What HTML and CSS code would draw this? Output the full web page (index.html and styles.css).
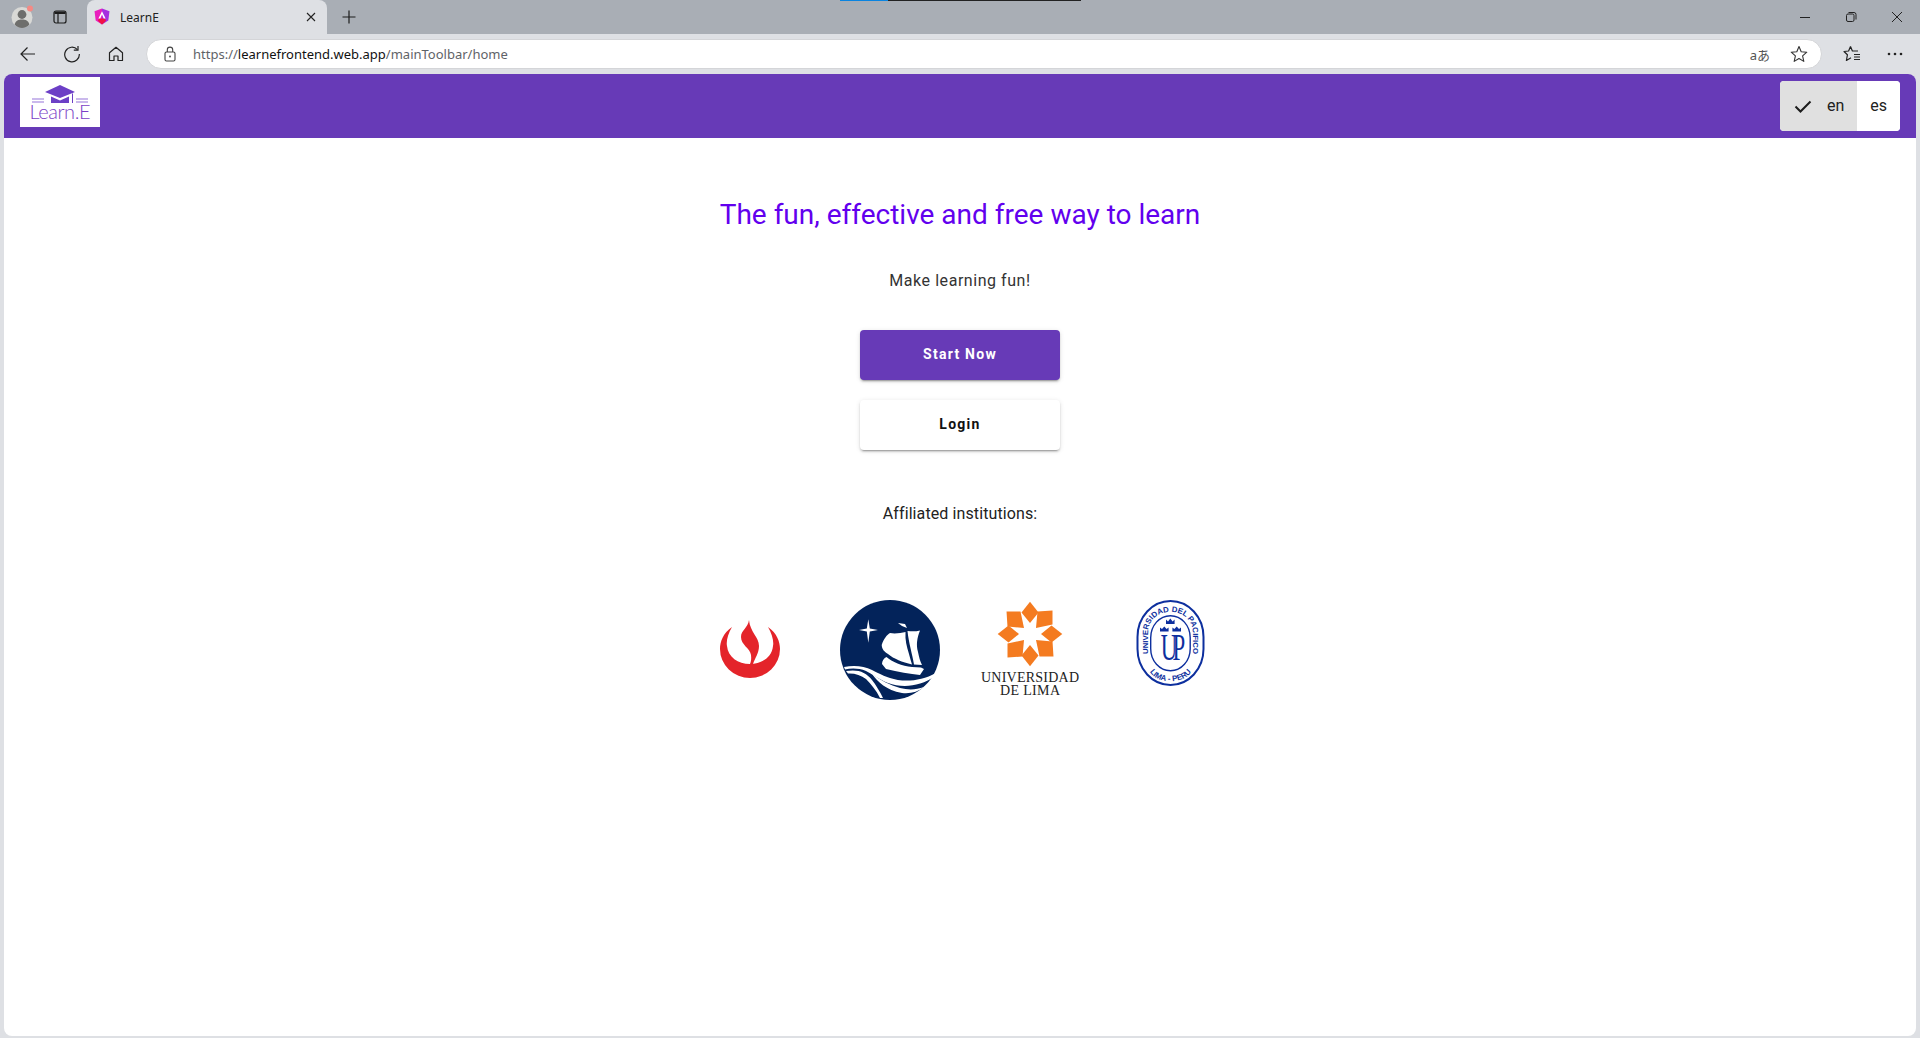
FILE: index.html
```html
<!DOCTYPE html>
<html lang="en">
<head>
  <meta charset="UTF-8">
  <meta name="viewport" content="width=device-width, initial-scale=1.0">
  <title>LearnE</title>
  <link rel="stylesheet" href="styles.css">
</head>
<body>
  <!-- Browser frame -->
  <div class="load-line"><span class="load-blue"></span><span class="load-dark"></span></div>
  <div class="tabbar">
    <div class="avatar">
      <svg width="24" height="24" viewBox="0 0 24 24">
        <circle cx="11" cy="12.5" r="10.5" fill="#d9d9d6"/>
        <circle cx="11" cy="9.5" r="4.4" fill="#6e6e6c"/>
        <path d="M3.6 19.5C4.6 15.8 7.5 14.6 11 14.6S17.4 15.8 18.4 19.5C16.5 21.7 14 23 11 23S5.5 21.7 3.6 19.5Z" fill="#6e6e6c"/>
        <circle cx="19" cy="3.4" r="3" fill="#f48a85"/>
      </svg>
    </div>
    <div class="tab-actions">
      <svg width="16" height="16" viewBox="0 0 16 16" fill="none" stroke="#1c1c1c" stroke-width="1.2">
        <rect x="2" y="2" width="12" height="12" rx="2"/>
        <path d="M6 5V14"/>
        <path d="M2.5 2.5H13.5V5H2.5Z" fill="#1c1c1c" stroke="none"/>
      </svg>
    </div>
    <div class="tab">
      <svg class="tab-icon" width="16" height="18" viewBox="0 0 16 18">
        <path d="M8 0.5L0.5 3.2L1.7 12.6L8 16.5Z" fill="#e91fbd"/>
        <path d="M8 0.5L15.5 3.2L14.3 12.6L8 16.5Z" fill="#a62fe0"/>
        <path d="M4 12.7L5 10.4H11L12 12.7L8 16.5Z" fill="#f01145"/>
        <path d="M8 3.2L11.6 10.4H9.7L8 6.6L6.3 10.4H4.4Z" fill="#fff"/>
      </svg>
      <span class="tab-title">LearnE</span>
      <svg class="tab-close" width="12" height="12" viewBox="0 0 12 12" fill="none" stroke="#222" stroke-width="1.1">
        <path d="M2 2L10 10M10 2L2 10"/>
      </svg>
    </div>
    <div class="new-tab">
      <svg width="14" height="14" viewBox="0 0 14 14" fill="none" stroke="#1c1c1c" stroke-width="1.2">
        <path d="M7 0.5V13.5M0.5 7H13.5"/>
      </svg>
    </div>
    <div class="window-btns">
      <svg width="12" height="12" viewBox="0 0 12 12" fill="none" stroke="#222" stroke-width="1"><path d="M1 6.5H11"/></svg>
      <svg width="12" height="12" viewBox="0 0 12 12" fill="none" stroke="#222" stroke-width="1"><rect x="1.5" y="3" width="7.5" height="7.5" rx="1.5"/><path d="M3.5 1.5H9A2 2 0 0 1 11 3.5V8.5"/></svg>
      <svg width="12" height="12" viewBox="0 0 12 12" fill="none" stroke="#222" stroke-width="1"><path d="M1 1L11 11M11 1L1 11"/></svg>
    </div>
  </div>

  <div class="navbar">
    <svg class="nav-icon" width="18" height="18" viewBox="0 0 18 18" fill="none" stroke="#222" stroke-width="1.2"><path d="M16 9H2M8.5 2.5L2 9L8.5 15.5"/></svg>
    <svg class="nav-icon" width="18" height="18" viewBox="0 0 18 18" fill="none" stroke="#222" stroke-width="1.2"><path d="M14.4 4.6A7.3 7.3 0 1 0 16.3 9"/><path d="M15 1V5.2H10.8"/></svg>
    <svg class="nav-icon" width="18" height="18" viewBox="0 0 18 18" fill="none" stroke="#222" stroke-width="1.2"><path d="M9 2.3L2.5 7.8V15.5H7V11H11V15.5H15.5V7.8Z" stroke-linejoin="round"/></svg>
    <div class="address">
      <svg class="lock" width="14" height="16" viewBox="0 0 14 16" fill="none" stroke="#444" stroke-width="1.1"><rect x="2" y="6" width="10" height="9" rx="1.5"/><path d="M4.3 6V3.8A2.7 2.7 0 0 1 9.7 3.8V6"/><circle cx="7" cy="10.5" r="0.9" fill="#444" stroke="none"/></svg>
      <span class="url"><span class="url-dim">https://</span>learnefrontend.web.app<span class="url-dim">/mainToolbar/home</span></span>
      <span class="translate">aあ</span>
      <svg class="star-icon" width="18" height="18" viewBox="0 0 18 18" fill="none" stroke="#333" stroke-width="1.1"><path d="M9 1.5L11.2 6.7L16.8 7.2L12.6 10.9L13.8 16.4L9 13.5L4.2 16.4L5.4 10.9L1.2 7.2L6.8 6.7Z" stroke-linejoin="round"/></svg>
    </div>
    <svg class="fav-icon" width="18" height="18" viewBox="0 0 18 18" fill="none" stroke="#222" stroke-width="1.2"><path d="M7.5 1.5L9.4 6H15M7.5 1.5L5.6 6L1 6.5L4.4 9.8L3.4 15.5L8 12.8" stroke-linejoin="round"/><path d="M11 9.5H17M11 12H17M11 14.5H17"/></svg>
    <svg class="more-icon" width="16" height="4" viewBox="0 0 16 4" fill="#222"><circle cx="2" cy="2" r="1.3"/><circle cx="8" cy="2" r="1.3"/><circle cx="14" cy="2" r="1.3"/></svg>
  </div>

  <!-- Page -->
  <div class="page">
    <header class="toolbar">
      <div class="logo">
        <svg width="80" height="50" viewBox="0 0 80 50">
          <path d="M40 8L55 15L40 21L25 15Z" fill="#6c3fc6"/>
          <path d="M31 19.5V26H49V19.5L40 23.5Z" fill="#6c3fc6"/>
          <path d="M52.5 16.5V26" stroke="#6c3fc6" stroke-width="1"/>
          <path d="M12 22H24M56 22H68M12 25H24M56 25H68" stroke="#b9a2e6" stroke-width="1.6"/>
          <text x="40" y="42" text-anchor="middle" class="logo-text" textLength="61">Learn.E</text>
        </svg>
      </div>
      <div class="lang-toggle">
        <button class="lang-btn lang-on">
          <svg width="18" height="18" viewBox="0 0 18 18" fill="none" stroke="#1c1c1c" stroke-width="2"><path d="M1.5 9.5L6.5 14.5L16.5 4.5"/></svg>
          en
        </button>
        <button class="lang-btn">es</button>
      </div>
    </header>

    <main class="home">
      <h1 class="title">The fun, effective and free way to learn</h1>
      <p class="subtitle">Make learning fun!</p>
      <button class="cta cta-primary">Start Now</button>
      <button class="cta">Login</button>
      <p class="affiliated">Affiliated institutions:</p>

      <div class="logos">
        <!-- UPC -->
        <svg width="100" height="100" viewBox="0 0 100 100">
          <path d="M32 27C23 33 20 42 20 49A30 29 0 0 0 80 49C80 42 77 33 68 27C72 34 74 41 73 46C72 57 62 64 50 64C38 64 28 57 27 46C26 41 28 34 32 27Z" fill="#e4242a"/>
          <path d="M49 20C48 28 41 30 41 37C41 45 50 48 51 55C51.5 59 51 62 50 64L53 64C55 58 59 53 59 46C59 37 50 32 49 20Z" fill="#e4242a"/>
        </svg>
        <!-- PUCP ship -->
        <svg width="100" height="100" viewBox="0 0 100 100">
          <circle cx="50" cy="50" r="50" fill="#03235a"/>
          <g fill="#fff">
            <path d="M28.3 19.3L29.8 28.5L38 30L29.8 31.5L28.3 42.7L26.8 31.5L19 30L26.8 28.5Z"/>
            <path d="M58 23L65 24L67 28L62 26Z"/>
            <path d="M41.7 45C44 38 47 35 50 33C55 34 61 33 65.5 32C65 40 66.5 46 69 54C70 58 71 61 72 64.5C62 62 54 59 48 54C45 52 42 50 41.7 45Z"/>
            <path d="M67.5 31C72 31.5 76 31.5 80 30.5C77 38 76 45 78 52C79 57 80 61 82 65L74 64.5C72.5 55 68.5 42 67.5 31Z"/>
            <path d="M42 64C42 61 44 58 46.5 57C52 62 62 66 72 67L81 67.5L84 69L80 75C70 74 58 72 46 69Z"/>
            <path d="M4 67C14 65 24 66 32 70C40 74 44 76 50 78C62 82 80 82 96 73L95 76C80 87 62 88 48 83C38 79 32 74 26 71C19 68 11 68 5 69.5Z"/>
            <path d="M6 71C18 69 26 72 32 80C36 85 40 92 43 98L40 98C36 90 31 84 26 79C21 75 14 73 8 73.5Z"/>
            <path d="M32 74C38 82 46 90 62 93C70 94 78 92 84 87C76 90 68 90 60 88C50 85 40 80 32 74Z"/>
          </g>
        </svg>
        <!-- Universidad de Lima -->
        <svg width="100" height="100" viewBox="0 0 100 100">
          <g fill="#f47b20">
            <path id="limaDiamond" d="M50 1.7L58.5 12.5L50 23L41.5 12.5Z"/>
            <path id="limaSquare" d="M26.5 11.5L40.5 11.5L44 28L27.5 26.5Z"/>
            <use href="#limaDiamond" transform="rotate(90 50 34)"/>
            <use href="#limaDiamond" transform="rotate(180 50 34)"/>
            <use href="#limaDiamond" transform="rotate(270 50 34)"/>
            <use href="#limaSquare" transform="rotate(90 50 34)"/>
            <use href="#limaSquare" transform="rotate(180 50 34)"/>
            <use href="#limaSquare" transform="rotate(270 50 34)"/>
          </g>
          <text x="50" y="81.5" text-anchor="middle" class="lima-text" textLength="98">UNIVERSIDAD</text>
          <text x="50" y="95" text-anchor="middle" class="lima-text" textLength="60">DE LIMA</text>
        </svg>
        <!-- Universidad del Pacifico -->
        <svg width="100" height="100" viewBox="0 0 100 100">
          <rect x="17.5" y="1" width="66" height="84" rx="33" ry="36" fill="#fff" stroke="#0d2f9e" stroke-width="2"/>
          <rect x="30.7" y="15.7" width="39.5" height="55" rx="19.7" ry="22" fill="#fff" stroke="#0d2f9e" stroke-width="1.4"/>
          <defs>
            <path id="upTop" d="M28 62V34C28 20 38 12 50.5 12S73 20 73 34V62"/>
            <path id="upBottom" d="M29 70C35 85 66 85 72 70"/>
          </defs>
          <text class="up-ring"><textPath href="#upTop" startOffset="50%" text-anchor="middle">UNIVERSIDAD DEL PACIFICO</textPath></text>
          <text class="up-ring"><textPath href="#upBottom" startOffset="50%" text-anchor="middle">LIMA - PERU</textPath></text>
          <g fill="#0d2f9e">
            <path d="M46 19.5L48 21.5L50.3 18.5L52.6 21.5L54.6 19.5V24H46Z"/>
            <path d="M40 27.5L42 29L44.3 26.5L46.6 29L48.6 27.5V31.5H40Z"/>
            <path d="M52.4 27.5L54.4 29L56.7 26.5L59 29L61 27.5V31.5H52.4Z"/>
          </g>
          <text transform="translate(50.5 60) scale(.6 1)" text-anchor="middle" class="up-mark">UP</text>
        </svg>
      </div>
    </main>
  </div>
</body>
</html>
```

FILE: styles.css
```css
html, body {
  height: 100%;
}
body {
  margin: 0;
  display: flex;
  flex-direction: column;
  height: 1038px;
  overflow: hidden;
  background: #dee0e4;
  font-family: Roboto, Arial, sans-serif;
}

/* browser frame */
.load-line {
  position: absolute;
  top: 0;
  left: 840px;
  display: flex;
  height: 1px;
}
.load-blue {
  width: 48px;
  background: #0a84e0;
}
.load-dark {
  width: 193px;
  background: #222;
}
.tabbar {
  display: flex;
  align-items: center;
  height: 34px;
  flex: none;
  background: #a9aeb5;
}
.avatar {
  display: flex;
  width: 52px;
  padding-left: 11px;
  box-sizing: border-box;
}
.tab-actions {
  display: flex;
  width: 35px;
}
.tab {
  display: flex;
  align-items: center;
  align-self: stretch;
  width: 240px;
  box-sizing: border-box;
  padding: 0 10px 0 7px;
  background: #dee0e4;
  border-radius: 8px 8px 0 0;
}
.tab-icon {
  flex: none;
}
.tab-title {
  flex: 1;
  margin-left: 10px;
  font-family: "Noto Sans", Arial, sans-serif;
  font-size: 12px;
  color: #222;
}
.new-tab {
  display: flex;
  margin-left: 15px;
}
.window-btns {
  display: flex;
  gap: 34px;
  margin-left: auto;
  margin-right: 17px;
}
.navbar {
  display: flex;
  align-items: center;
  height: 40px;
  flex: none;
  padding-left: 19px;
}
.nav-icon {
  margin-right: 26px;
  flex: none;
}
.nav-icon:nth-child(3) {
  margin-right: 21px;
}
.address {
  display: flex;
  align-items: center;
  width: 1676px;
  height: 30px;
  flex: none;
  box-sizing: border-box;
  padding: 0 13px 0 16px;
  background: #fff;
  border: 1px solid #d4d5d8;
  border-radius: 15px;
}
.lock {
  flex: none;
  margin-right: 16px;
}
.url {
  flex: 1;
  font-family: "Noto Sans", Arial, sans-serif;
  font-size: 13px;
  color: #111;
}
.url-dim {
  color: #5f6368;
}
.translate {
  margin-right: 20px;
  font-family: "Noto Sans", "Noto Sans CJK JP", sans-serif;
  font-size: 13px;
  color: #555;
}
.star-icon {
  flex: none;
}
.fav-icon {
  margin-left: 21px;
  flex: none;
}
.more-icon {
  margin-left: 26px;
  flex: none;
}

/* page */
.page {
  flex: 1;
  display: flex;
  flex-direction: column;
  margin: 0 4px 2px;
  overflow: hidden;
  background: #fff;
  border-radius: 8px;
}
.toolbar {
  display: flex;
  align-items: center;
  justify-content: space-between;
  height: 64px;
  flex: none;
  padding: 0 16px;
  background: #673ab7;
}
.logo {
  display: flex;
  width: 80px;
  height: 50px;
  margin-top: -8px;
  background: #fff;
}
.logo-text {
  font-family: Lato, Arial, sans-serif;
  font-weight: 300;
  font-size: 20px;
  fill: #7b3fc6;
}
.lang-toggle {
  display: flex;
  height: 50px;
  overflow: hidden;
  background: #fff;
  border-radius: 4px;
}
.lang-btn {
  display: flex;
  align-items: center;
  gap: 15px;
  padding: 0 13px 2px;
  border: none;
  background: #fff;
  color: #212121;
  font-family: Roboto, Arial, sans-serif;
  font-size: 16px;
}
.lang-btn svg {
  margin-top: 2px;
}
.lang-on {
  padding: 0 13px 2px 14px;
  background: #e0e0e0;
}
.home {
  flex: 1;
  display: flex;
  flex-direction: column;
  align-items: center;
}
.title {
  margin: 58px 0 0;
  font-size: 28px;
  font-weight: 400;
  line-height: 38px;
  color: #6200ee;
}
.subtitle {
  margin: 35px 0 0;
  font-size: 16px;
  line-height: 24px;
  letter-spacing: 0.55px;
  color: #333;
}
.cta {
  width: 200px;
  height: 50px;
  flex: none;
  margin-top: 20px;
  padding: 0 0 2px;
  border: none;
  border-radius: 4px;
  background: #fff;
  color: #111;
  font-family: Roboto, Arial, sans-serif;
  font-size: 14px;
  font-weight: 700;
  letter-spacing: 1.25px;
  box-shadow: 0 3px 1px -2px rgba(0,0,0,.2), 0 2px 2px 0 rgba(0,0,0,.14), 0 1px 5px 0 rgba(0,0,0,.12);
}
.cta-primary {
  margin-top: 37px;
  background: #673ab7;
  color: #fff;
}
.affiliated {
  margin: 52px 0 0;
  font-size: 16px;
  line-height: 24px;
  letter-spacing: 0.1px;
  color: #222;
}
.logos {
  display: flex;
  gap: 40px;
  margin-top: 74px;
}
.lima-text {
  font-family: "Liberation Serif", serif;
  font-size: 14px;
  fill: #222;
}
.up-ring {
  font-family: "Liberation Sans", Arial, sans-serif;
  font-size: 7.8px;
  font-weight: 700;
  fill: #0d2f9e;
}
.up-mark {
  font-family: "Liberation Serif", serif;
  font-size: 38px;
  letter-spacing: -8px;
  fill: #0d2f9e;
}
```
